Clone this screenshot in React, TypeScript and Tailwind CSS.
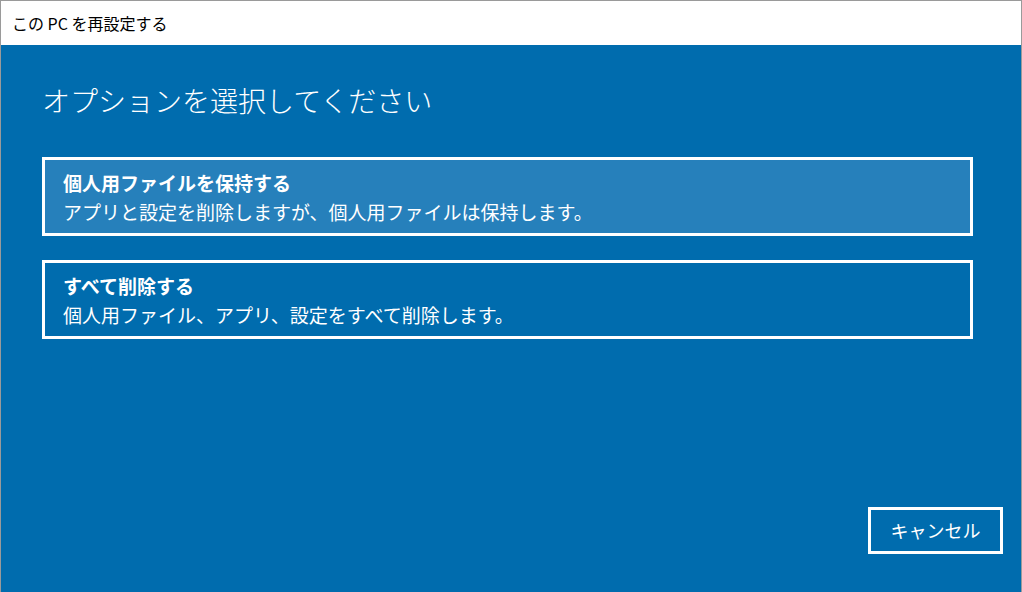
import React from "react"

const FONT = { fontFamily: '"Noto Sans CJK JP", "Noto Sans", sans-serif' }

const OPTIONS = [
  { title: "個人用ファイルを保持する", desc: "アプリと設定を削除しますが、個人用ファイルは保持します。", active: true },
  { title: "すべて削除する", desc: "個人用ファイル、アプリ、設定をすべて削除します。", active: false },
]

export default function App() {
  return (
    <div className="w-[1022px] h-[592px] flex flex-col border-l border-t border-r border-[#9a9a9a] bg-[#006cae] overflow-hidden" style={FONT}>
      {/* Title bar */}
      <div className="h-[44px] shrink-0 bg-white flex items-center pl-[11px] text-[16px] text-black">
        この PC を再設定する
      </div>

      <main className="flex-1 flex flex-col text-white">
        <div className="pl-[41px] pr-[48px] pt-[35px]">
          <h1 className="text-[28px] leading-[40px] font-light">オプションを選択してください</h1>

          <div className="mt-[37px] flex flex-col gap-[24px]">
            {OPTIONS.map(o => (
              <div
                key={o.title}
                className={`h-[79px] border-[3px] border-white pl-[18px] pt-[8px] ${o.active ? "bg-[#2680bb]" : "bg-[#006cae]"}`}
              >
                <p className="text-[19px] leading-[29px] font-bold">{o.title}</p>
                <p className="text-[19px] leading-[29px]">{o.desc}</p>
              </div>
            ))}
          </div>
        </div>

        <div className="mt-auto flex justify-end pr-[18px] pb-[38px]">
          <button className="w-[135px] h-[47px] border-[3px] border-white text-[18px] text-white flex items-center justify-center">
            キャンセル
          </button>
        </div>
      </main>
    </div>
  )
}
